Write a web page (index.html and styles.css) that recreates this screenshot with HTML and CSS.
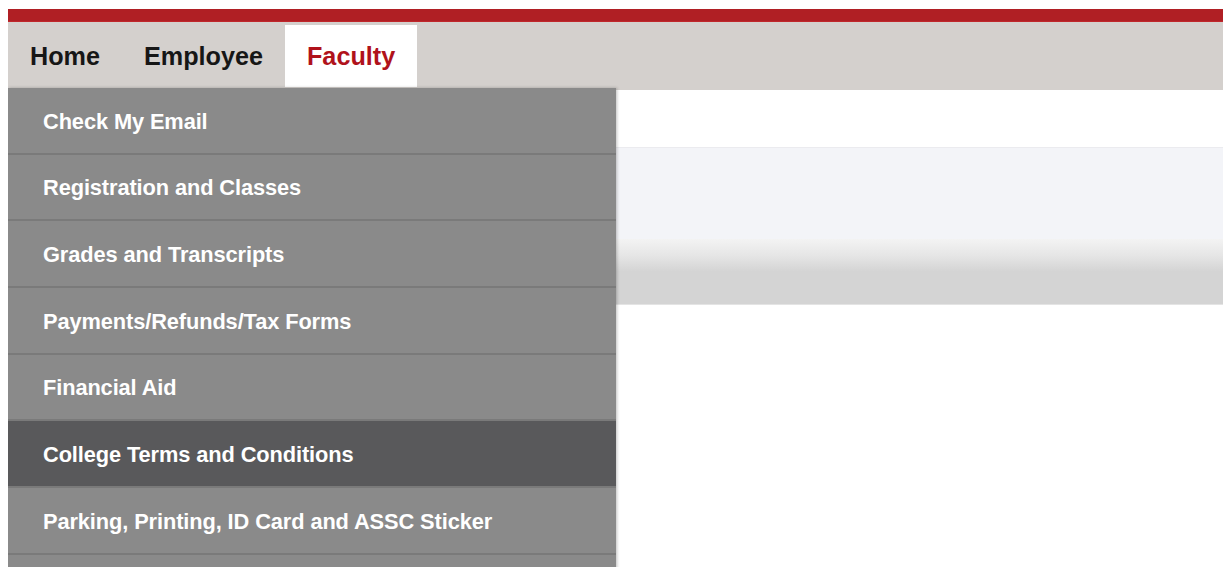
FILE: index.html
```html
<!DOCTYPE html>
<html lang="en">
<head>
<meta charset="utf-8">
<title>Faculty</title>
<link rel="stylesheet" href="styles.css">
</head>
<body>
<div class="page">
  <div class="brand-bar"></div>
  <nav class="main-nav">
    <a class="tab" href="#">Home</a>
    <a class="tab" href="#">Employee</a>
    <a class="tab tab-active" href="#">Faculty</a>
  </nav>
  <ul class="dropdown">
    <li><a href="#">Check My Email</a></li>
    <li><a href="#">Registration and Classes</a></li>
    <li><a href="#">Grades and Transcripts</a></li>
    <li><a href="#">Payments/Refunds/Tax Forms</a></li>
    <li><a href="#">Financial Aid</a></li>
    <li class="hover"><a href="#">College Terms and Conditions</a></li>
    <li><a href="#">Parking, Printing, ID Card and ASSC Sticker</a></li>
  </ul>
  <main class="content">
    <div class="spacer"></div>
    <div class="banner"></div>
    <div class="toolbar"></div>
  </main>
</div>
</body>
</html>
```

FILE: styles.css
```css
html, body {
  margin: 0;
  padding: 0;
  background: #fff;
}

body {
  padding: 9px 0 0 8px;
  font-family: "Liberation Sans", Arial, sans-serif;
}

.page {
  position: relative;
  height: 558px;
  overflow: hidden;
}

.brand-bar {
  height: 13px;
  background: #b01f24;
  border-bottom: 1px solid #c0272b;
  box-sizing: border-box;
}

.main-nav {
  display: flex;
  height: 68px;
  padding-top: 3px;
  box-sizing: border-box;
  background: #d4d0cd;
}

.tab {
  display: flex;
  align-items: center;
  height: 62px;
  padding: 0 22px;
  font-size: 25.2px;
  font-weight: bold;
  color: #161616;
  text-decoration: none;
}

.tab-active {
  background: #fff;
  color: #b0121b;
}

/* Faculty submenu, open over the page */
.dropdown {
  position: absolute;
  top: 79px;
  left: 0;
  width: 608px;
  margin: 0;
  padding: 0 0 40px;
  list-style: none;
  background: #8a8a8a;
  box-shadow: 1px 0 3px rgba(0, 0, 0, 0.25);
  z-index: 2;
}

.dropdown li {
  height: 64.67px;
  border-bottom: 2px solid #7a7a7a;
  display: flex;
  align-items: center;
}

.dropdown li.hover {
  background: #59595b;
}

.dropdown a {
  padding: 3px 0 0 35px;
  font-size: 21.8px;
  font-weight: bold;
  color: #fff;
  text-decoration: none;
  letter-spacing: -0.1px;
}

.content {
  display: flex;
  flex-direction: column;
}

.spacer {
  height: 57px;
}

.banner {
  height: 92px;
  background: #f3f4f8;
  border-top: 1px solid #ebebef;
  box-sizing: border-box;
}

.toolbar {
  height: 66px;
  background: linear-gradient(#f3f3f3 0%, #e6e6e6 25%, #d4d4d4 50%, #d4d4d4 100%);
  border-bottom: 1px solid #e4e4e4;
  box-sizing: border-box;
}
```
